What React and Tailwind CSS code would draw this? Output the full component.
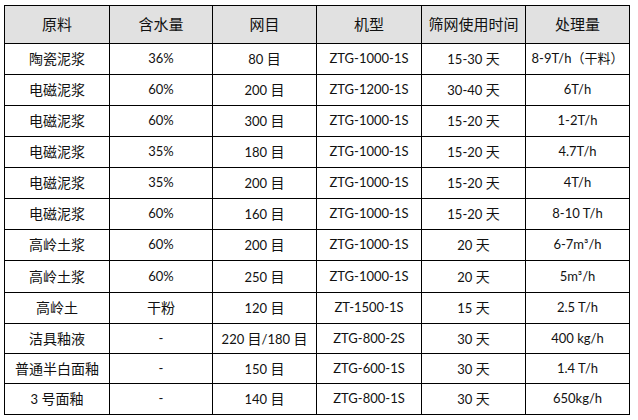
const headers = ["原料", "含水量", "网目", "机型", "筛网使用时间", "处理量"];

const colWidths = ["w-[105px]", "w-[103px]", "w-[104px]", "w-[105px]", "w-[104px]", "w-[104px]"];

const rows = [
  { h: "h-[31px]", cells: ["陶瓷泥浆", "36%", "80 目", "ZTG-1000-1S", "15-30 天", "8-9T/h（干料）"] },
  { h: "h-[31px]", cells: ["电磁泥浆", "60%", "200 目", "ZTG-1200-1S", "30-40 天", "6T/h"] },
  { h: "h-[31px]", cells: ["电磁泥浆", "60%", "300 目", "ZTG-1000-1S", "15-20 天", "1-2T/h"] },
  { h: "h-[31px]", cells: ["电磁泥浆", "35%", "180 目", "ZTG-1000-1S", "15-20 天", "4.7T/h"] },
  { h: "h-[31px]", cells: ["电磁泥浆", "35%", "200 目", "ZTG-1000-1S", "15-20 天", "4T/h"] },
  { h: "h-[31px]", cells: ["电磁泥浆", "60%", "160 目", "ZTG-1000-1S", "15-20 天", "8-10 T/h"] },
  { h: "h-[31px]", cells: ["高岭土浆", "60%", "200 目", "ZTG-1000-1S", "20 天", "6-7m³/h"] },
  { h: "h-[32px]", cells: ["高岭土浆", "60%", "250 目", "ZTG-1000-1S", "20 天", "5m³/h"] },
  { h: "h-[31px]", cells: ["高岭土", "干粉", "120 目", "ZT-1500-1S", "15 天", "2.5 T/h"] },
  { h: "h-[30px]", cells: ["洁具釉液", "-", "220 目/180 目", "ZTG-800-2S", "30 天", "400 kg/h"] },
  { h: "h-[30px]", cells: ["普通半白面釉", "-", "150 目", "ZTG-600-1S", "30 天", "1.4 T/h"] },
  { h: "h-[31px]", cells: ["3 号面釉", "-", "140 目", "ZTG-800-1S", "30 天", "650kg/h"] },
];

// Chinese runs are set a touch larger than the Latin/number runs;
// the bracketed note is smaller
const Mixed = ({ text }) =>
  text.split(/([\u4e00-\u9fff（）]+)/).filter(Boolean).map((part, i) => {
    if (part.includes("（")) return <span key={i} className="text-[13px]">{part}</span>;
    if (/[\u4e00-\u9fff]/.test(part)) return <span key={i} className="text-[14px]">{part}</span>;
    return <span key={i}>{part}</span>;
  });

export default function App() {
  return (
    <div className="w-[638px] h-[420px] bg-white pt-[5px] pl-[4px] font-['Lato','Noto_Sans_CJK_SC',sans-serif] text-[#111]">
      <table className="border-collapse table-fixed w-[625px]">
        <thead>
          <tr className="h-[38px] bg-[#e1e1e1]">
            {headers.map((h, i) => (
              <th key={h} className={`${colWidths[i]} border border-black text-[15px] font-normal text-center p-0`}>
                {h}
              </th>
            ))}
          </tr>
        </thead>
        <tbody>
          {rows.map((row, r) => (
            <tr key={r} className={row.h}>
              {row.cells.map((c, i) => (
                <td key={i} className="border border-black text-[13px] text-center p-0 whitespace-nowrap">
                  <Mixed text={c} />
                </td>
              ))}
            </tr>
          ))}
        </tbody>
      </table>
    </div>
  );
}
